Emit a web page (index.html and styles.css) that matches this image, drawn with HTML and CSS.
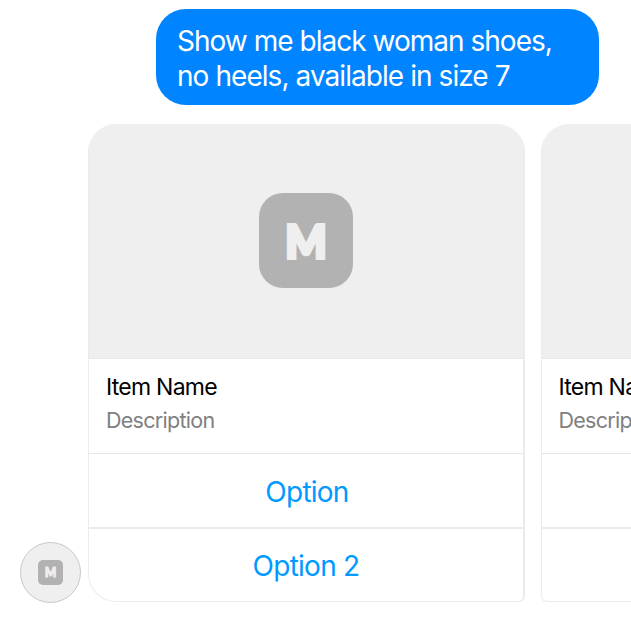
FILE: index.html
```html
<!DOCTYPE html>
<html lang="en">
<head>
<meta charset="utf-8">
<title>Chat</title>
<link rel="stylesheet" href="styles.css">
</head>
<body>
<main class="chat">
  <div class="message"><span class="line first">Show me black woman shoes,</span><span class="line second">no heels, available in size 7</span></div>
  <div class="reply">
    <div class="avatar"><span class="logo small">
      <svg viewBox="0 0 94 94"><text x="47" y="64" textLength="42" lengthAdjust="spacingAndGlyphs">M</text></svg>
    </span></div>
    <div class="carousel">
      <article class="card lead">
        <div class="cover"><span class="logo">
          <svg viewBox="0 0 94 94"><text x="47" y="64" textLength="41" lengthAdjust="spacingAndGlyphs">M</text></svg>
        </span></div>
        <div class="info"><h2>Item Name</h2><p>Description</p></div>
        <a class="option">Option</a>
        <a class="option two">Option 2</a>
      </article>
      <article class="card">
        <div class="cover"></div>
        <div class="info"><h2>Item Name</h2><p>Description</p></div>
        <a class="option"></a>
        <a class="option two"></a>
      </article>
    </div>
  </div>
</main>
</body>
</html>
```

FILE: styles.css
```css
* { box-sizing: border-box; }
body { margin: 0; background: #fff; font-family: Inter, "Liberation Sans", sans-serif; overflow: hidden; }
.chat { width: 631px; height: 622px; padding-top: 9px; overflow: hidden; }
.message {
  width: 443px;
  height: 96px;
  margin-left: 156px;
  padding: 15px 0 0 21px;
  border-radius: 30px;
  background: #0084ff;
  color: #fff;
  font-size: 28px;
  line-height: 35px;
}
.line { display: block; white-space: nowrap; }
.first { letter-spacing: -0.98px; }
.second { letter-spacing: -0.94px; }
.reply { display: flex; align-items: flex-end; margin-top: 19px; padding-left: 20px; }
.avatar {
  flex: none;
  display: flex;
  align-items: center;
  justify-content: center;
  width: 61px;
  height: 61px;
  margin: 0 7px -1px 0;
  border: 1px solid #c8c8c8;
  border-radius: 50%;
  background: #efefef;
}
.carousel { display: flex; gap: 15.5px; }
.card {
  flex: none;
  width: 437px;
  height: 478px;
  border: solid #ebebeb;
  border-width: 0 2px 1px 1px;
  border-radius: 28px 28px 6px 6px;
  overflow: hidden;
}
.lead { border-bottom-left-radius: 28px; }
.cover {
  display: flex;
  align-items: center;
  justify-content: center;
  height: 235px;
  margin: 0 -2px 0 -1px;
  padding: 0 2px 1px 0;
  background: #efefef;
  border-bottom: 1px solid #e8e8e8;
}
.logo {
  width: 94px;
  height: 95px;
  border-radius: 24px;
  background: #b2b2b2;
}
.logo svg { display: block; width: 100%; height: 100%; }
.logo text {
  font: 900 46px Lato, sans-serif;
  text-anchor: middle;
  fill: #efefef;
  stroke: #efefef;
  stroke-width: 4;
}
.small { width: 25px; height: 25px; border-radius: 5px; }
.info { height: 94px; padding: 13px 17px 0; }
.info h2 { margin: 0; font-size: 23px; font-weight: 400; line-height: 30px; letter-spacing: -0.75px; color: #000; white-space: nowrap; }
.info p { margin: 4px 0 0; font-size: 21.5px; line-height: 28px; letter-spacing: -0.72px; color: #808080; }
.option {
  display: flex;
  align-items: center;
  justify-content: center;
  height: 74px;
  padding: 3px 0 0 2px;
  border-top: 1px solid #e6e6e6;
  color: #0099ff;
  font-size: 28px;
  letter-spacing: -0.75px;
}
.two { border-top: 2px solid #ebebeb; padding: 2px 0 0; }
```
